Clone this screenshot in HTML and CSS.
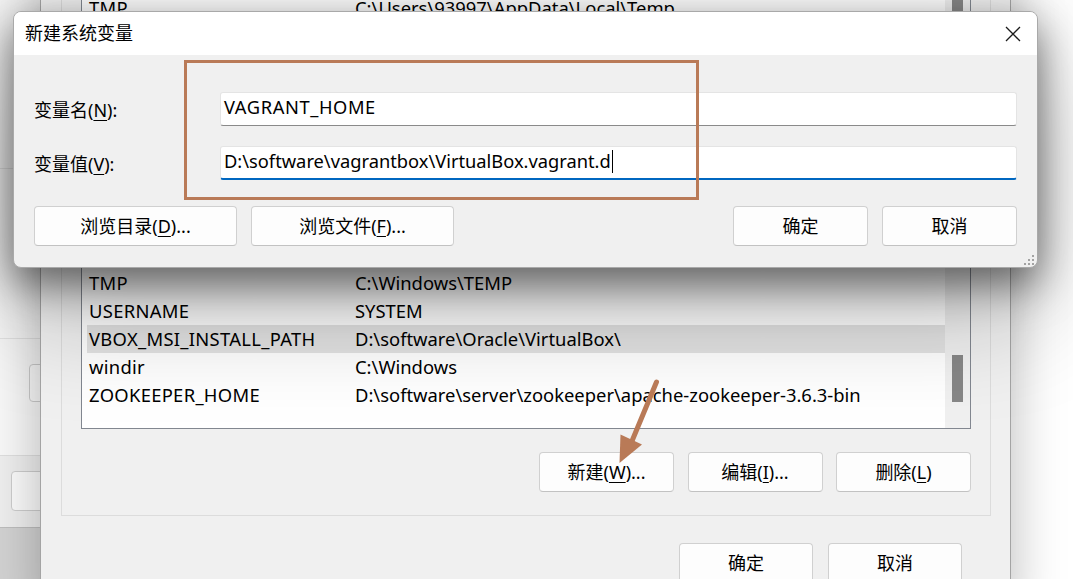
FILE: index.html
```html
<!DOCTYPE html>
<html lang="zh-CN">
<head>
<meta charset="utf-8">
<title>新建系统变量</title>
<link rel="stylesheet" href="styles.css">
</head>
<body>
<div class="desktop">
  <div class="back-window">
    <div class="bw-sec bw-a"></div>
    <div class="bw-sec bw-b"></div>
    <div class="bw-sec bw-c"><div class="bw-btn bw-btn1"></div></div>
    <div class="bw-sec bw-d"><div class="bw-btn bw-btn2"></div></div>
    <div class="bw-sec bw-e"></div>
  </div>

  <div class="env-window">
    <div class="group user-group">
      <div class="list user-list">
        <div class="list-rows user-rows">
          <div class="row"><span class="name">TMP</span><span class="value">C:\Users\93997\AppData\Local\Temp</span></div>
        </div>
        <div class="scrollbar"><div class="thumb thumb-user"></div></div>
      </div>
    </div>
    <div class="group sys-group">
      <div class="list sys-list">
        <div class="list-rows sys-rows">
          <div class="row"><span class="name">TMP</span><span class="value">C:\Windows\TEMP</span></div>
          <div class="row"><span class="name">USERNAME</span><span class="value">SYSTEM</span></div>
          <div class="row selected"><span class="name">VBOX_MSI_INSTALL_PATH</span><span class="value">D:\software\Oracle\VirtualBox\</span></div>
          <div class="row"><span class="name">windir</span><span class="value">C:\Windows</span></div>
          <div class="row"><span class="name">ZOOKEEPER_HOME</span><span class="value">D:\software\server\zookeeper\apache-zookeeper-3.6.3-bin</span></div>
        </div>
        <div class="scrollbar"><div class="thumb thumb-sys"></div></div>
      </div>
      <div class="btn-row">
        <button class="btn btn-list">新建(<span class="u">W</span>)...</button>
        <button class="btn btn-list">编辑(<span class="u">I</span>)...</button>
        <button class="btn btn-list">删除(<span class="u">L</span>)</button>
      </div>
    </div>
    <div class="env-footer">
      <button class="btn btn-footer">确定</button>
      <button class="btn btn-footer">取消</button>
    </div>
  </div>

  <div class="dialog">
    <div class="titlebar">
      <span class="title">新建系统变量</span>
      <svg class="close" width="16" height="16" viewBox="0 0 16 16"><path d="M1 1 L15 15 M15 1 L1 15" stroke="#1b1b1b" stroke-width="1.3" fill="none"/></svg>
    </div>
    <div class="dialog-body">
      <div class="field">
        <span class="label">变量名(<span class="u">N</span>):</span>
        <div class="input"><span class="caps">VAGRANT_HOME</span></div>
      </div>
      <div class="field">
        <span class="label">变量值(<span class="u">V</span>):</span>
        <div class="input focused"><span class="path">D:\software\vagrantbox\VirtualBox.vagrant.d</span><span class="caret"></span></div>
      </div>
      <div class="dialog-actions">
        <div class="action-group">
          <button class="btn btn-wide">浏览目录(<span class="u">D</span>)...</button>
          <button class="btn btn-wide">浏览文件(<span class="u">F</span>)...</button>
        </div>
        <div class="action-group">
          <button class="btn btn-dlg">确定</button>
          <button class="btn btn-dlg">取消</button>
        </div>
      </div>
    </div>
    <svg class="grip" width="10" height="10" viewBox="0 0 10 10">
      <rect x="8" y="0" width="2" height="2" fill="#a3a3a3"/>
      <rect x="4" y="4" width="2" height="2" fill="#a3a3a3"/>
      <rect x="8" y="4" width="2" height="2" fill="#a3a3a3"/>
      <rect x="0" y="8" width="2" height="2" fill="#a3a3a3"/>
      <rect x="4" y="8" width="2" height="2" fill="#a3a3a3"/>
      <rect x="8" y="8" width="2" height="2" fill="#a3a3a3"/>
    </svg>
  </div>

  <div class="annot-box"></div>
  <svg class="annot-arrow" width="1073" height="579" viewBox="0 0 1073 579">
    <line x1="656.5" y1="382" x2="632" y2="441" stroke="#b97a57" stroke-width="5" stroke-linecap="round"/>
    <polygon points="619.5,463 620.5,434.5 642,444.5" fill="#b97a57"/>
  </svg>
</div>
</body>
</html>
```

FILE: styles.css
```css
* { box-sizing: border-box; }

html, body {
  margin: 0;
  padding: 0;
  background: #ffffff;
}

body {
  font-family: "Noto Sans", "Noto Sans CJK SC", sans-serif;
  font-size: 18px;
  color: #000;
}

.desktop {
  position: relative;
  width: 1073px;
  height: 579px;
  overflow: hidden;
  background: #ffffff;
}

.u {
  text-decoration: underline;
  text-decoration-thickness: 1px;
  text-underline-offset: 3px;
}

/* ---------- window far behind (left strip) ---------- */
.back-window {
  position: absolute;
  left: 0;
  top: 0;
  width: 60px;
  height: 579px;
  display: flex;
  flex-direction: column;
  background: #f8f8f8;
}
.bw-sec { flex: none; }
.bw-a { height: 169px; border-bottom: 1px solid #e4e4e4; }
.bw-b { height: 170px; border-bottom: 1px solid #e4e4e4; }
.bw-c { height: 117px; border-bottom: 1px solid #dedede; padding: 25px 0 0 29px; }
.bw-d { height: 71px; background: #eeeeee; padding: 15px 0 0 11px; }
.bw-e { flex: 1; background: #d2d2d2; border-top: 1px solid #bdbdbd; }
.bw-btn {
  width: 60px;
  background: #fbfbfb;
  border: 1px solid #cdcdcd;
  border-radius: 4px;
}
.bw-btn1 { height: 38px; }
.bw-btn2 { height: 40px; }

/* ---------- environment variables window ---------- */
.env-window {
  position: absolute;
  left: 40px;
  top: -20px;
  width: 971px;
  height: 640px;
  background: #f0f0f0;
  border-left: 1px solid #a4a4a4;
  border-right: 1px solid #a4a4a4;
  box-shadow: 0 0 50px rgba(0, 0, 0, 0.28);
  display: flex;
  flex-direction: column;
}

.group {
  margin: 0 19px 0 20px;
  border: 1px solid #dcdcdc;
  padding: 0 19px;
}
.user-group {
  border-top: none;
  height: 60px;
}
.sys-group {
  margin-top: 60px;
  padding: 19px 19px 23px 19px;
}

.list {
  background: #ffffff;
  border: 1px solid #828790;
  display: grid;
  grid-template-columns: 1fr 25px;
}
.user-list {
  border-top: none;
  border-bottom: none;
  height: 60px;
}
.list-rows {
  padding-left: 5px;
  display: flex;
  flex-direction: column;
}
.user-rows { padding-top: 14px; }
.sys-rows { padding-top: 148px; padding-bottom: 19px; }

.row {
  height: 28px;
  line-height: 28px;
  padding-left: 2px;
  display: flex;
  white-space: nowrap;
  font-size: 18.4px;
}
.row.selected { background: #e3e3e3; }
.name { width: 266px; flex: none; letter-spacing: 0.3px; }
.value { flex: none; }

.scrollbar {
  background: #f0f0f0;
  padding-left: 7px;
}
.thumb {
  width: 11px;
  background: #878787;
}
.thumb-user { height: 50px; }
.thumb-sys { margin-top: 234px; height: 47px; }

.btn {
  font-family: inherit;
  font-size: 18px;
  color: #000;
  background: #fdfdfd;
  border: 1px solid #d0d0d0;
  border-bottom-color: #c2c2c2;
  border-radius: 4px;
  height: 40px;
  padding: 0;
  line-height: 38px;
  white-space: nowrap;
}

.btn-row {
  margin-top: 23px;
  display: flex;
  justify-content: flex-end;
  gap: 13.5px;
}
.btn-list { width: 135px; }

.env-footer {
  margin-top: 27px;
  display: flex;
  justify-content: flex-end;
  gap: 15px;
  padding-right: 48px;
}
.btn-footer { width: 134px; }

/* ---------- top dialog ---------- */
.dialog {
  position: absolute;
  left: 13px;
  top: 11px;
  width: 1025px;
  height: 257px;
  border: 1px solid #a9a9a9;
  border-radius: 8px;
  background: #f0f0f0;
  overflow: hidden;
  box-shadow: 0 16px 40px rgba(0, 0, 0, 0.5), 0 40px 110px rgba(0, 0, 0, 0.28);
}

.titlebar {
  height: 43px;
  background: #ffffff;
  display: flex;
  align-items: center;
  justify-content: space-between;
  padding: 0 16px 0 11px;
}
.title { line-height: 43px; }
.close { display: block; }

.dialog-body {
  padding: 37px 20px 21px 20px;
  display: flex;
  flex-direction: column;
  gap: 20px;
}

.field {
  display: grid;
  grid-template-columns: 186px 1fr;
  align-items: center;
  height: 34px;
}

.input {
  height: 34px;
  background: #ffffff;
  border: 1px solid #e4e4e4;
  border-bottom: 1px solid #8a8a8a;
  border-radius: 3px;
  padding: 0 3px;
  line-height: 32px;
  white-space: nowrap;
  display: flex;
  align-items: center;
  font-size: 18.3px;
}
.input .caps { letter-spacing: 0.6px; padding-bottom: 4px; }
.input .path { padding-bottom: 4px; }
.input.focused {
  border-bottom: 2px solid #0067c0;
}
.caret {
  display: inline-block;
  width: 1px;
  height: 23px;
  background: #000;
  margin-left: 1px;
  margin-bottom: 2px;
}

.dialog-actions {
  margin-top: 6px;
  display: flex;
  justify-content: space-between;
}
.action-group {
  display: flex;
  gap: 14px;
}
.btn-wide { width: 203px; }
.btn-dlg { width: 135px; }

.grip {
  position: absolute;
  right: 3px;
  bottom: 2px;
}

/* ---------- annotations ---------- */
.annot-box {
  position: absolute;
  left: 184px;
  top: 60px;
  width: 515px;
  height: 140px;
  border: 3px solid #b97a57;
}
.annot-arrow {
  position: absolute;
  left: 0;
  top: 0;
  pointer-events: none;
}
```
